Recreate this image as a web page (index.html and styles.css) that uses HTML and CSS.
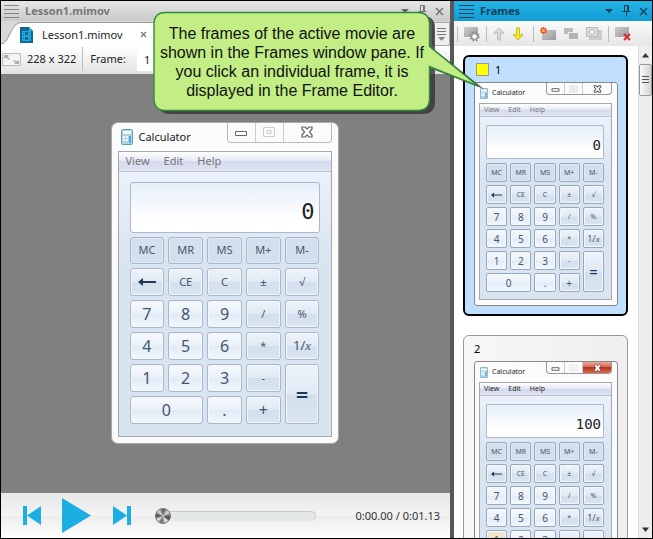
FILE: index.html
```
<!DOCTYPE html>
<html lang="en">
<head>
<meta charset="utf-8">
<title>Lesson1.mimov</title>
<link rel="stylesheet" href="styles.css">
</head>
<body>
<div class="app">
  <main class="pane editor">
    <header class="titlebar">
      <span class="grip"></span>
      <h1>Lesson1.mimov</h1>
      <button class="tool" aria-label="Menu"><svg width="10" height="6"><path d="M1 1h8l-4 4z" fill="#666"/></svg></button>
      <button class="tool" aria-label="Pin"><svg width="9" height="12"><path d="M2.500.5h4v6M5.500.500v6M2.500.500v6M.500 6.500h8M4.500 6.500v5" fill="none" stroke="#777"/></svg></button>
      <button class="tool" aria-label="Close"><svg width="9" height="9"><path d="M1 1l7 7M8 1l-7 7" stroke="#777" stroke-width="1.600"/></svg></button>
    </header>
    <nav class="tabs">
      <svg class="tab-edge" width="19" height="24"><path d="M0 22C8 22 9 3 19 .500V24H0z" fill="#fff"/><path d="M0 22C8 22 9 3 19 .500" fill="none" stroke="#999"/></svg>
      <div class="tab">
        <svg width="13" height="16"><path d="M0 0h9l4 4v12H0z" fill="#0c6c96"/><path d="M9 0v4h4z" fill="#2ba9d8"/><path d="M2 4h9v10H2z" fill="#25a8dc"/><path d="M3 5h1v1H3zm0 3h1v1H3zm0 3h1v1H3zM9 5h1v1H9zm0 3h1v1H9zm0 3h1v1H9zM5 5h3v3H5zm0 5h3v3H5z" fill="#0c6c96"/></svg>
        <a href="#">Lesson1.mimov</a>
        <button class="tool" aria-label="Close tab"><svg width="7" height="7"><path d="M1 1l5 5M6 1L1 6" stroke="#777" stroke-width="1.300"/></svg></button>
      </div>
      <button class="overflow" aria-label="Tab list"><svg width="9" height="13"><path d="M0 .500h9M0 3.500h9M0 6.500h9" stroke="#777"/><path d="M1 9h7l-3.500 4z" fill="#888"/></svg></button>
    </nav>
    <div class="options">
      <svg width="19" height="13"><path d="M.500.500h18v12H.500z" fill="#f4f4f4" stroke="#bbb"/><path d="M2 2h5L5.500 3.500 8 6 7 7 4 4.500 2 6zM17 11h-5l1.500-1.500L11 8l1-1 3 1.500L17 7z" fill="#aaa"/></svg>
      <span>228 x 322</span>
      <label for="frame-no">Frame:</label>
      <input id="frame-no" type="text" value="1">
    </div>
    <section class="canvas">
      <div class="calc">
        <div class="calc-title"><svg class="calc-icon" viewBox="0 0 12 16"><rect x=".5" y=".5" width="11" height="15" rx="1" fill="#a9d5ec" stroke="#6c9db9"/><path d="M2 2h8v3H2z" fill="#fff8df"/><path d="M2 7h2v2H2zm3 0h2v2H5zm-3 3h2v2H2zm3 0h2v2H5z" fill="#fff"/><path d="M8 7h2v7H8z" fill="#5aa9d3"/></svg><span>Calculator</span>
          <div class="caption"><button aria-label="Minimize"><svg viewBox="0 0 14 12"><path d="M1.500 5.500h11v4h-11z" fill="#fff" stroke="#666"/></svg></button><button aria-label="Maximize"><svg viewBox="0 0 14 12"><path d="M1.500 1.500h11v9h-11zM5 4.500h4v3H5z" fill="none" stroke="#ccc"/></svg></button><button aria-label="Close"><svg viewBox="0 0 14 12"><path d="M2 1h3l2 2 2-2h3v2L9.500 6 12 9v2H9L7 9l-2 2H2V9l2.500-3L2 3z" fill="#fff" stroke="#5c5c64" stroke-width="1.200"/></svg></button></div></div>
        <div class="client">
          <div class="menu"><span>View</span><span>Edit</span><span>Help</span></div>
          <div class="body">
            <output class="display">0</output>
            <div class="keys">
              <button class="m">MC</button><button class="m">MR</button><button class="m">MS</button><button class="m">M+</button><button class="m">M-</button>
              <button class="op" aria-label="Backspace"><svg class="back" viewBox="0 0 18 8"><path d="M0 4l5-4v3h13v2H5v3z" fill="#1e395b"/></svg></button><button class="op">CE</button><button class="op">C</button><button class="op">±</button><button class="op">√</button>
              <button>7</button><button>8</button><button>9</button><button class="op">/</button><button class="op">%</button>
              <button>4</button><button>5</button><button>6</button><button class="op">*</button><button class="op inv">1/<i>x</i></button>
              <button>1</button><button>2</button><button>3</button><button class="op">-</button><button class="op eq">=</button>
              <button class="zero">0</button><button>.</button><button class="op plus">+</button>
            </div>
          </div>
        </div>
      </div>
    </section>
    <footer class="player">
      <button class="tool" aria-label="First frame"><svg width="18" height="20"><path d="M0 0h4v19H0zM18 0v19L4 9.500z" fill="#1caee2"/></svg></button>
      <button class="tool" aria-label="Play"><svg width="29" height="36"><path d="M0 0v35l29-17.500z" fill="#1caee2"/></svg></button>
      <button class="tool" aria-label="Last frame"><svg width="18" height="20"><path d="M14 0h4v19h-4zM0 0v19L14 9.500z" fill="#1caee2"/></svg></button>
      <input class="seek" type="range" min="0" max="113" value="0" aria-label="Position">
      <span class="time">0:00.00 / 0:01.13</span>
    </footer>
  </main>

  <aside class="pane frames">
    <header class="titlebar active">
      <span class="grip"></span>
      <h2>Frames</h2>
      <button class="tool" aria-label="Menu"><svg width="10" height="6"><path d="M1 1h8l-4 4z" fill="#123f5c"/></svg></button>
      <button class="tool" aria-label="Pin"><svg width="9" height="12"><path d="M2.500.5h4v6M5.500.500v6M2.500.500v6M.500 6.500h8M4.500 6.500v5" fill="none" stroke="#123f5c"/></svg></button>
      <button class="tool" aria-label="Close"><svg width="9" height="9"><path d="M1 1l7 7M8 1l-7 7" stroke="#123f5c" stroke-width="1.400"/></svg></button>
    </header>
    <div class="toolbar">
      <svg width="0" height="0" class="defs"><defs><linearGradient id="g" x2="1" y2="1"><stop stop-color="#ccc"/><stop offset="1" stop-color="#999"/></linearGradient></defs></svg>
      <i class="sep"></i>
      <button class="tool" aria-label="Frame settings"><svg width="16" height="16"><path d="M0 1h14v10H0z" fill="url(#g)"/><circle cx="10.500" cy="10.500" r="4.200" fill="none" stroke="#888" stroke-width="1.800" stroke-dasharray="1.700 1.600"/><circle cx="10.500" cy="10.500" r="3" fill="#fff" stroke="#999" stroke-width="1.500"/></svg></button>
      <i class="sep"></i>
      <button class="tool" aria-label="Move up"><svg width="12" height="14"><path d="M6 1l5 5-1 1-2.500-2V13h-3V5L2 7 1 6z" fill="#ddd" stroke="#bbb"/></svg></button>
      <button class="tool down-arrow" aria-label="Move down"><svg width="12" height="14"><path d="M6 13l5-5-1-1-2.500 2V1h-3v8L2 7 1 8z" fill="#f4ec1c" stroke="#c9b92c"/></svg></button>
      <i class="sep"></i>
      <button class="tool" aria-label="New frame"><svg width="16" height="14"><path d="M2 3h14v10H2z" fill="url(#g)"/><path d="M3.500 0v7M0 3.500h7M1 1l5 5M6 1L1 6" stroke="#f0441c" stroke-width="1.400"/><circle cx="3.500" cy="3.500" r="1.500" fill="#fc3"/></svg></button>
      <button class="tool" aria-label="Duplicate frame"><svg width="16" height="14"><path d="M1 1h9v6H1z" fill="#bbb"/><path d="M5.500 5.500h10v7h-10z" fill="#b4b4b4" stroke="#eee"/></svg></button>
      <button class="tool" aria-label="Capture frame"><svg width="16" height="14"><path d="M5 3h11v10H3V9z" fill="#ccc"/><path d="M.500.500h11v9H.500z" fill="#ddd" stroke="#bbb"/><circle cx="6" cy="5" r="2.500" fill="#f4f4f4" stroke="#bbb"/></svg></button>
      <i class="sep"></i>
      <button class="tool" aria-label="Delete frame"><svg width="16" height="15"><path d="M0 1h14v10H0z" fill="url(#g)"/><path d="M9 8l6 6M15 8l-6 6" stroke="#d92a2a" stroke-width="2"/></svg></button>
    </div>
    <div class="list-area">
      <div class="list">
        <article class="card selected">
          <div class="card-head"><i class="swatch"></i>1</div>
          <div class="calc small">
            <div class="calc-title"><svg class="calc-icon" viewBox="0 0 12 16"><rect x=".5" y=".5" width="11" height="15" rx="1" fill="#a9d5ec" stroke="#6c9db9"/><path d="M2 2h8v3H2z" fill="#fff8df"/><path d="M2 7h2v2H2zm3 0h2v2H5zM2 10h2v2H2zm3 0h2v2H5z" fill="#fff"/><path d="M8 7h2v7H8z" fill="#5aa9d3"/></svg><span>Calculator</span>
              <div class="caption"><button aria-label="Minimize"><svg viewBox="0 0 14 12"><path d="M1.500 5.500h11v4h-11z" fill="#fff" stroke="#666" stroke-width="1.500"/></svg></button><button aria-label="Maximize"><svg viewBox="0 0 14 12"><path d="M1.500 1.500h11v9h-11zM5 4.500h4v3H5z" fill="none" stroke="#ccc"/></svg></button><button aria-label="Close"><svg viewBox="0 0 14 12"><path d="M2 1h3l2 2 2-2h3v2L9.500 6 12 9v2H9L7 9l-2 2H2V9l2.500-3L2 3z" fill="#fff" stroke="#5c5c64" stroke-width="1.600"/></svg></button></div></div>
            <div class="client">
              <div class="menu"><span>View</span><span>Edit</span><span>Help</span></div>
              <div class="body">
                <output class="display">0</output>
                <div class="keys">
                  <button class="m">MC</button><button class="m">MR</button><button class="m">MS</button><button class="m">M+</button><button class="m">M-</button>
                  <button class="op" aria-label="Backspace"><svg class="back" viewBox="0 0 18 8"><path d="M0 4l5-4v3h13v2H5v3z" fill="#1e395b"/></svg></button><button class="op">CE</button><button class="op">C</button><button class="op">±</button><button class="op">√</button>
                  <button>7</button><button>8</button><button>9</button><button class="op">/</button><button class="op">%</button>
                  <button>4</button><button>5</button><button>6</button><button class="op">*</button><button class="op inv">1/<i>x</i></button>
                  <button>1</button><button>2</button><button>3</button><button class="op">-</button><button class="op eq">=</button>
                  <button class="zero">0</button><button>.</button><button class="op plus">+</button>
                </div>
              </div>
            </div>
          </div>
        </article>
        <article class="card">
          <div class="card-head">2</div>
          <div class="calc small live">
            <div class="calc-title"><svg class="calc-icon" viewBox="0 0 12 16"><rect x=".5" y=".5" width="11" height="15" rx="1" fill="#a9d5ec" stroke="#6c9db9"/><path d="M2 2h8v3H2z" fill="#fff8df"/><path d="M2 7h2v2H2zm3 0h2v2H5zM2 10h2v2H2zm3 0h2v2H5z" fill="#fff"/><path d="M8 7h2v7H8z" fill="#5aa9d3"/></svg><span>Calculator</span>
              <div class="caption"><button aria-label="Minimize"><svg viewBox="0 0 14 12"><path d="M1.500 5.500h11v4h-11z" fill="#fff" stroke="#666" stroke-width="1.500"/></svg></button><button aria-label="Maximize"><svg viewBox="0 0 14 12"><path d="M1.500 1.500h11v9h-11zM5 4.500h4v3H5z" fill="none" stroke="#ddd"/></svg></button><button class="close" aria-label="Close"><svg viewBox="0 0 14 12"><path d="M2 1h3l2 2 2-2h3v2L9.500 6 12 9v2H9L7 9l-2 2H2V9l2.500-3L2 3z" fill="#fff" stroke="#843a32"/></svg></button></div></div>
            <div class="client">
              <div class="menu"><span>View</span><span>Edit</span><span>Help</span></div>
              <div class="body">
                <output class="display">100</output>
                <div class="keys">
                  <button class="m">MC</button><button class="m">MR</button><button class="m">MS</button><button class="m">M+</button><button class="m">M-</button>
                  <button class="op" aria-label="Backspace"><svg class="back" viewBox="0 0 18 8"><path d="M0 4l5-4v3h13v2H5v3z" fill="#1e395b"/></svg></button><button class="op">CE</button><button class="op">C</button><button class="op">±</button><button class="op">√</button>
                  <button>7</button><button>8</button><button>9</button><button class="op">/</button><button class="op">%</button>
                  <button>4</button><button>5</button><button>6</button><button class="op">*</button><button class="op inv">1/<i>x</i></button>
                  <button class="clicked">1</button><button>2</button><button>3</button><button class="op">-</button><button class="op eq">=</button>
                  <button class="zero">0</button><button>.</button><button class="op plus">+</button>
                </div>
              </div>
            </div>
          </div>
        </article>
      </div>
      <div class="scroll">
        <button class="tool" aria-label="Scroll up"><svg width="8" height="5"><path d="M0 4.500h7L3.500 0z" fill="#333"/></svg></button>
        <div class="scroll-thumb"><svg width="7" height="8"><path d="M0 .500h7M0 3.500h7M0 6.500h7" stroke="#555"/></svg></div>
        <button class="tool down" aria-label="Scroll down"><svg width="8" height="5"><path d="M0 .500h7L3.500 5z" fill="#333"/></svg></button>
      </div>
    </div>
  </aside>

  <div class="callout">
    <svg width="332" height="106" viewBox="0 0 332 106">
      <path d="M17 5H270Q282 5 282 17V39L331 78 282 59V91Q282 103 270 103H17Q5 103 5 91V17Q5 5 17 5z" fill="#333" fill-opacity=".8"/>
      <path d="M12.500 1.500H264.500Q276.500 1.500 276.500 13.500V35.500L325 75 276.500 55.500V87.500Q276.500 99.500 264.500 99.500H12.500Q1 99.500 1 87.500V13.500Q1 1.500 12.500 1.500z" fill="#c3ee86" stroke="#2f8a3a" stroke-width="1.400"/>
    </svg>
    <p>The frames of the active movie are<br>shown in the Frames window pane. If<br>you click an individual frame, it is<br>displayed in the Frame Editor.</p>
  </div>
</div>
</body>
</html>
```
FILE: styles.css
```
* { box-sizing: border-box; }
body { margin: 0; font: 11px/16px "Noto Sans", "Open Sans", sans-serif; color: #222; }
button { font: inherit; color: inherit; padding: 0; margin: 0; border: 0; background: none; }
svg { display: block; flex: none; }
h1, h2, p { margin: 0; font-size: 11px; }

.app { position: relative; display: grid; grid-template-columns: 1fr 198px; column-gap: 4px; height: 100vh; border: 1px solid #000; background: #585858; overflow: hidden; }
.pane { display: flex; flex-direction: column; min-width: 0; min-height: 0; overflow: hidden; }
.tool { display: flex; align-items: center; justify-content: center; }

.titlebar { display: flex; align-items: center; gap: 8px; height: 20px; flex: none; padding: 0 6px 0 3px; background: linear-gradient(#e6e6e6, #cacaca); }
.titlebar h1, .titlebar h2 { flex: 1; color: #777; margin-right: auto; margin-left: -2px; }
.grip { width: 15px; height: 13px; background: repeating-linear-gradient(#888 0 1px, transparent 1px 4px); }
.titlebar.active { background: linear-gradient(#25b4e6, #129cd2); padding: 0 4px 0 5px; }
.titlebar.active h2 { color: #123f5c; }
.titlebar.active .grip { background: repeating-linear-gradient(#123f5c 0 1px, transparent 1px 4px); }

.tabs { display: flex; height: 25px; flex: none; padding-top: 1px; background: #d8d8d8; }
.tab { flex: 1; display: flex; align-items: center; background: #fff; border-top: 1px solid #999; }
.tab a { color: #222; text-decoration: none; margin: 0 17px 0 9px; }
.overflow { display: flex; justify-content: center; align-items: center; width: 18px; border: 1px solid #aaa; border-left: 2px solid #999; background: #eee; }

.options { display: flex; align-items: center; height: 28px; flex: none; background: linear-gradient(#fff, #e2e2e2); padding: 0 0 2px 1px; }
.options span { margin: 0 6px 0 6px; }
.options label { border-left: 1px solid #bbb; padding: 4px 11px 4px 7px; }
.options input { width: 80px; height: 23px; border: 0; padding: 0 7px; font: inherit; color: #222; background: #fff; }

.canvas { flex: 1; min-height: 0; display: grid; place-content: center; padding: 0 2px 2px 0; background: #808080; }
.player { display: flex; align-items: center; flex: none; height: 45px; padding: 0 10px 0 22px; background: linear-gradient(#e8e8e8, #f3f3f3 50%, #ececec 51%, #fff); }
.player .tool:nth-child(2) { margin: 0 22px 0 21px; }
.seek { -webkit-appearance: none; appearance: none; width: 161px; height: 16px; margin: 0 auto 0 24px; background: none; }
.seek::-webkit-slider-runnable-track { height: 10px; border-radius: 5px; background: #e4e8e9; border-top: 1px solid #c8c8c8; border-right: 1px solid #ccc; }
.seek::-webkit-slider-thumb { -webkit-appearance: none; width: 16px; height: 16px; margin-top: -4px; border-radius: 8px; border: 1px solid #777; background: conic-gradient(#555, #ddd 15%, #666 25%, #444 32%, #eee 40%, #666 55%, #eee 65%, #444 75%, #ddd 88%, #555); }
.time { color: #333; }

/* Calculator window: full size, with a reduced variant for thumbnails */
.calc { display: flex; flex-direction: column; width: 228px; height: 322px; padding: 0 6px 6px; border: 1px solid #aaa; border-radius: 7px; background: #fbfbfc; color: #222; font-size: 11px; line-height: 14px; }
.calc-title { display: flex; height: 28px; flex: none; align-items: center; gap: 6px; padding-left: 3px; }
.calc-icon { width: 12px; height: 16px; }
.caption { display: flex; align-self: flex-start; margin-left: auto; height: 20px; border: 1px solid #bbb; border-top: 0; border-radius: 0 0 4px 4px; overflow: hidden; }
.caption button { display: grid; place-content: center; width: 28px; border-right: 1px solid #ccc; }
.caption button:last-child { width: 47px; border: 0; }
.caption svg { width: 14px; height: 12px; }
.client { flex: 1; display: flex; flex-direction: column; border: 1px solid #a3a9b1; background: linear-gradient(#edf3fc, #d9e4f1 40%); }
.menu { display: flex; gap: 14px; flex: none; height: 20px; align-items: center; padding-left: 7px; color: #777; background: linear-gradient(#fff, #e6eaf6 45%, #d4daec 50%, #dfe3f3); border-bottom: 1px solid #bcc3cf; }
.body { flex: 1; display: flex; flex-direction: column; gap: 4px; padding: 10px 11px 12px; }
.display { display: flex; flex: none; justify-content: flex-end; align-items: flex-end; height: 51px; padding: 0 4px 8px; border: 1px solid #adb9c8; border-radius: 3px; background: linear-gradient(#e6effa, #fff 75%); font: 22px/24px "DejaVu Sans Mono", monospace; color: #222; }
.keys { flex: 1; display: grid; grid-template-columns: repeat(5, 1fr); grid-auto-rows: 1fr; gap: 4px; }
.keys button { display: grid; place-content: center; min-width: 0; min-height: 0; border: 1px solid #a9b8c9; border-radius: 3px; box-shadow: inset 0 0 0 1px #f2f7fc; background: linear-gradient(#f7fafd, #e8f0f8 50%, #e2ebf5 52%, #f2f8fd); color: #44566f; font-size: 16px; line-height: 16px; }
.keys .m { background: #d3dfed; box-shadow: inset 0 0 0 1px #dfe9f3; font-size: 11px; }
.keys .op { background: linear-gradient(#eef3f9, #e0e9f3 50%, #d3dfec 52%, #dae5f1); font-size: 11px; }
.keys .inv { display: block; font-size: 13px; }
.keys .inv i { font-family: "Liberation Serif", serif; }
.keys .eq { grid-row: span 2; font-size: 22px; font-weight: 600; color: #1e395b; }
.keys .plus { font-size: 16px; }
.keys .zero { grid-column: span 2; }
.back { width: 18px; height: 8px; }

.small { width: 144px; height: 224px; padding: 0 5px 5px 4px; border-color: #888; border-radius: 3px; font-size: 7px; line-height: 10px; }
.small .calc-title { height: 20px; gap: 4px; padding-left: 1px; }
.small .calc-icon { width: 8px; height: 11px; }
.small .caption { height: 12px; border-color: #999; }
.small .caption button { width: 18px; }
.small .caption button:last-child { width: 28px; }
.small .caption svg { width: 9px; height: 8px; }
.small .menu { height: 13px; gap: 9px; padding-left: 4px; }
.small .body { gap: 4px; padding: 8px 7px 7px 6px; }
.small .display { height: 34px; padding: 0 2px 5px; border-radius: 1px; font-size: 14px; line-height: 16px; }
.small .keys { gap: 3px; }
.small .keys button { border-color: #98a9bd; border-radius: 2px; font-size: 10px; line-height: 12px; }
.small .keys .m, .small .keys .op { font-size: 7px; }
.small .keys .inv { font-size: 9px; }
.small .keys .eq { font-size: 14px; }
.small .keys .plus { font-size: 10px; }
.small .back { width: 11px; height: 6px; }
.live .menu { color: #222; }
.caption .close { background: linear-gradient(#e9a99c, #d26a56 45%, #b8321c 50%, #d96a4b); }
.keys .clicked { background: radial-gradient(circle, #f6e3bf, #efe4cf); }

.toolbar { display: flex; align-items: center; flex: none; height: 25px; padding: 0 0 0 3px; gap: 6px; background: linear-gradient(#fafafa, #e6e6e6); }
.toolbar .sep { width: 1px; height: 16px; background: #bbb; }
.toolbar .tool + .tool { margin-left: 1px; }
.toolbar .down-arrow { margin: 0 3px 0 5px; }
.defs { position: absolute; }

.list-area { flex: 1; display: flex; min-height: 0; background: #fff; }
.list { flex: 1; min-width: 0; overflow: hidden; padding: 9px 10px 0 9px; }
.card { height: 261px; margin-bottom: 19px; padding: 0 10px 8px; border: 1px solid #999; border-radius: 6px; background: linear-gradient(90deg, #f7f7f7, #efefef); }
.card.selected { padding: 0 9px 8px; border: 2px solid #000; background: #c0dfff; }
.card-head { display: flex; align-items: center; gap: 6px; height: 25px; font-size: 11px; color: #000; }
.swatch { width: 13px; height: 13px; margin-left: 2px; background: #ff0; border: 1px solid #999; }
.scroll { display: flex; flex-direction: column; align-items: center; width: 14px; flex: none; border-left: 1px solid #ddd; background: #eee; }
.scroll .tool { height: 18px; }
.scroll .down { margin-top: auto; }
.scroll-thumb { display: grid; place-content: center; width: 13px; height: 32px; border: 1px solid #999; border-radius: 2px; background: linear-gradient(90deg, #fafafa, #d4d4d4); }

.callout { position: absolute; left: 152px; top: 10px; }
.callout p { position: absolute; left: 0; top: 13px; width: 278px; text-align: center; white-space: nowrap; font: 16px/19px "Liberation Sans", Arial, sans-serif; color: #111; }
```
